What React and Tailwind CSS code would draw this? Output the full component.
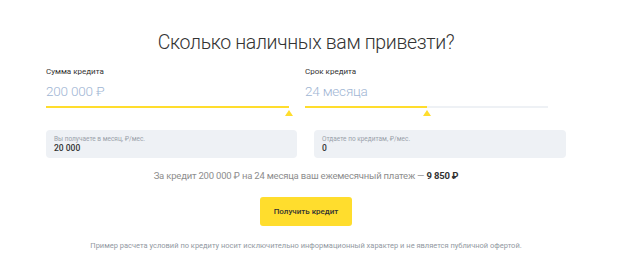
import React from "react";

function Slider({ label, value, fill }) {
  return (
    <div className="flex flex-col">
      <div className="text-[8px] leading-[10px] text-[#333333] mt-[12px]">{label}</div>
      <div className="text-[13.5px] leading-[16px] font-light text-[#9fb6d4] mt-[6px] tracking-[-0.2px]">{value}</div>
      <div className="relative mt-[7px] w-[243px] h-[2px] bg-[#eef1f5]">
        <div className="h-full bg-[#ffdd2d]" style={{ width: fill }} />
        <svg
          className="absolute top-[4px]"
          style={{ left: fill - 4 }}
          width="8"
          height="6"
          viewBox="0 0 8 6"
        >
          <polygon points="4,0 8,6 0,6" fill="#ffdd2d" />
        </svg>
      </div>
    </div>
  );
}

function InfoBox({ label, value }) {
  return (
    <div className="h-[28px] rounded-[4px] bg-[#eef1f5] px-[8px] pt-[6px] flex flex-col">
      <div className="text-[6.5px] leading-[7px] text-[#9aa1aa]">{label}</div>
      <div className="text-[8.5px] leading-[10px] font-medium text-[#333333]">{value}</div>
    </div>
  );
}

export default function App() {
  return (
    <div className="w-[623px] h-[259px] bg-white overflow-hidden font-['Roboto',sans-serif] text-[#333333]">
      <div className="ml-[46px] w-[520px] pt-[31px] flex flex-col">
        <h1 className="text-center text-[19.5px] leading-[24px] font-light tracking-[-0.35px] text-[#333333]">
          Сколько наличных вам привезти?
        </h1>
        <div className="grid grid-cols-[251px_251px] gap-x-[8px]">
          <Slider label="Сумма кредита" value="200 000 ₽" fill={243} />
          <Slider label="Срок кредита" value="24 месяца" fill={122} />
        </div>
        <div className="mt-[22px] grid grid-cols-[251px_252px] gap-x-[17px]">
          <InfoBox label="Вы получаете в месяц, ₽/мес." value="20 000" />
          <InfoBox label="Отдаете по кредитам, ₽/мес." value="0" />
        </div>
        <p className="mt-[11px] text-center text-[9.5px] leading-[14px] tracking-[-0.2px] text-[#8d8d8d]">
          За кредит 200 000 ₽ на 24 месяца ваш ежемесячный платеж —{" "}
          <span className="font-bold text-[#333333]">9 850 ₽</span>
        </p>
        <div className="mt-[14px] flex justify-center">
          <button className="w-[92px] h-[29px] rounded-[3px] bg-[#ffdd2d] text-[8px] font-medium text-[#333333]">
            Получить кредит
          </button>
        </div>
        <p className="mt-[15px] text-center text-[7.5px] leading-[10px] text-[#9299a2]">
          Пример расчета условий по кредиту носит исключительно информационный характер и не является публичной офертой.
        </p>
      </div>
    </div>
  );
}
